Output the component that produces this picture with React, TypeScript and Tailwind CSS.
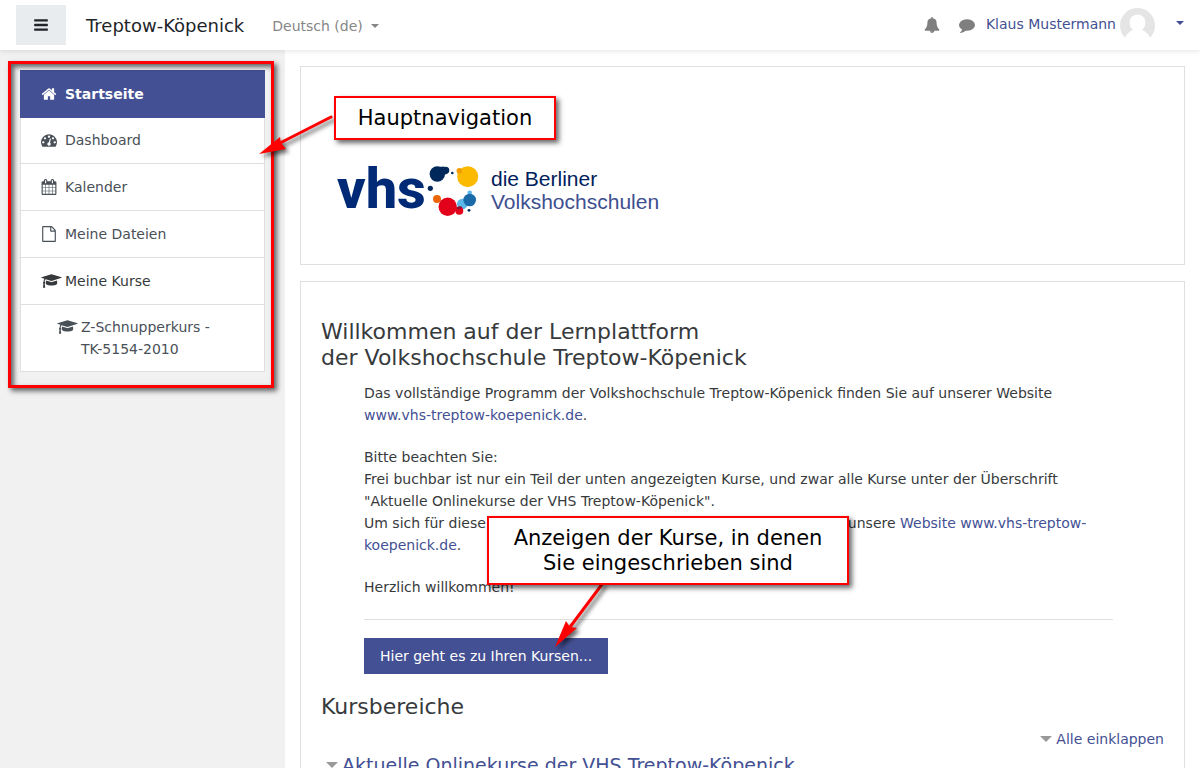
import type { ReactNode } from "react";

type IconProps = {
  d: string;
  width?: number;
  viewBox?: string;
  className?: string;
};

const paths = {
  home: "M1472 992v480q0 26-19 45t-45 19h-384v-384h-256v384h-384q-26 0-45-19t-19-45v-480q0-1 .5-3t.5-3l575-474 575 474q1 2 1 6zm223-69l-62 74q-8 9-21 11h-3q-13 0-21-7l-692-577-692 577q-12 8-24 7-13-2-21-11l-62-74q-8-10-7-23.5t11-21.5l719-599q32-26 76-26t76 26l244 204v-195q0-14 9-23t23-9h192q14 0 23 9t9 23v408l219 182q10 8 11 21.5t-7 23.5z",
  dashboard:
    "M384 1152q0-53-37.5-90.5t-90.5-37.5-90.5 37.5-37.5 90.5 37.5 90.5 90.5 37.5 90.5-37.5 37.5-90.5zm192-448q0-53-37.5-90.5t-90.5-37.5-90.5 37.5-37.5 90.5 37.5 90.5 90.5 37.5 90.5-37.5 37.5-90.5zm428 481l101-382q6-26-7.5-48.5t-38.5-29.5-48 6.5-30 39.5l-101 382q-60 5-107 43.5t-63 98.5q-20 77 20 146t117 89 146-20 89-117q16-60-6-117t-72-91zm660-33q0-53-37.5-90.5t-90.5-37.5-90.5 37.5-37.5 90.5 37.5 90.5 90.5 37.5 90.5-37.5 37.5-90.5zm-640-640q0-53-37.5-90.5t-90.5-37.5-90.5 37.5-37.5 90.5 37.5 90.5 90.5 37.5 90.5-37.5 37.5-90.5zm448 192q0-53-37.5-90.5t-90.5-37.5-90.5 37.5-37.5 90.5 37.5 90.5 90.5 37.5 90.5-37.5 37.5-90.5zm320 448q0 261-141 483-19 29-54 29h-1402q-35 0-54-29-141-221-141-483 0-182 71-348t191-286 286-191 348-71 348 71 286 191 191 286 71 348z",
  calendar:
    "M192 1664h288v-288h-288v288zm352 0h320v-288h-320v288zm-352-352h288v-320h-288v320zm352 0h320v-320h-320v320zm-352-384h288v-288h-288v288zm736 736h320v-288h-320v288zm-384-736h320v-288h-320v288zm768 736h288v-288h-288v288zm-384-352h320v-320h-320v320zm-352-864v-288q0-13-9.5-22.5t-22.5-9.5h-64q-13 0-22.5 9.5t-9.5 22.5v288q0 13 9.5 22.5t22.5 9.5h64q13 0 22.5-9.5t9.5-22.5zm736 864h288v-320h-288v320zm-384-384h320v-288h-320v288zm384 0h288v-288h-288v288zm32-480v-288q0-13-9.5-22.5t-22.5-9.5h-64q-13 0-22.5 9.5t-9.5 22.5v288q0 13 9.5 22.5t22.5 9.5h64q13 0 22.5-9.5t9.5-22.5zm384-64v1280q0 52-38 90t-90 38h-1408q-52 0-90-38t-38-90v-1280q0-52 38-90t90-38h128v-96q0-66 47-113t113-47h64q66 0 113 47t47 113v96h384v-96q0-66 47-113t113-47h64q66 0 113 47t47 113v96h128q52 0 90 38t38 90z",
  file: "M1596 380q28 28 48 76t20 88v1152q0 40-28 68t-68 28h-1344q-40 0-68-28t-28-68v-1600q0-40 28-68t68-28h896q40 0 88 20t76 48zm-444-244v376h376q-10-29-22-41l-313-313q-12-12-41-22zm384 1528v-1024h-416q-40 0-68-28t-28-68v-416h-768v1536h1280z",
  cap: "M1774 836l18 316q4 69-82 128t-235 93.5-323 34.5-323-34.5-235-93.5-82-128l18-316 574 181q22 7 48 7t48-7zm530-324q0 23-22 31l-1120 352q-4 1-10 1t-10-1l-652-206q-43 34-71 111.5t-34 178.5q63 36 63 109 0 69-58 107l58 433q2 14-8 25-9 11-24 11h-192q-15 0-24-11-10-11-8-25l58-433q-58-38-58-107 0-73 65-111 11-207 98-330l-333-104q-22-8-22-31t22-31l1120-352q4-1 10-1t10 1l1120 352q22 8 22 31z",
  bell: "M912 1696q0-16-16-16-59 0-101.5-42.5t-42.5-101.5q0-16-16-16t-16 16q0 73 51.5 124.5t124.5 51.5q16 0 16-16zm816-288q0 52-38 90t-90 38h-448q0 106-75 181t-181 75-181-75-75-181h-448q-52 0-90-38t-38-90q50-42 91-88t85-119.5 74.5-158.5 50-206 19.5-260q0-152 117-282.5t307-158.5q-8-19-8-39 0-40 28-68t68-28 68 28 28 68q0 20-8 39 190 28 307 158.5t117 282.5q0 139 19.5 260t50 206 74.5 158.5 85 119.5 91 88z",
  comment:
    "M1792 896q0 174-120 321.5t-326 233-450 85.5q-70 0-145-8-198 175-460 242-49 14-114 22-17 2-30.5-9t-17.5-29v-1q-3-4-.5-12t2-10 4.5-9.5l6-9 7-8.5 8-9q7-8 31-34.5t34.5-38 31-39.5 32.5-51 27-59 26-76q-157-89-247.5-220t-90.5-281q0-174 120-321.5t326-233 450-85.5 450 85.5 326 233 120 321.5z",
  bars: "M1664 1344v128q0 26-19 45t-45 19h-1408q-26 0-45-19t-19-45v-128q0-26 19-45t45-19h1408q26 0 45 19t19 45zm0-512v128q0 26-19 45t-45 19h-1408q-26 0-45-19t-19-45v-128q0-26 19-45t45-19h1408q26 0 45 19t19 45zm0-512v128q0 26-19 45t-45 19h-1408q-26 0-45-19t-19-45v-128q0-26 19-45t45-19h1408q26 0 45 19t19 45z",
};

function Icon({ d, width = 16, viewBox = "0 0 1792 1792", className = "" }: IconProps) {
  return (
    <svg width={width} height={16} viewBox={viewBox} fill="currentColor" className={className} aria-hidden="true">
      <path d={d} />
    </svg>
  );
}

function Caret({ className = "" }: { className?: string }) {
  return (
    <svg width="8" height="4" viewBox="0 0 8 4" fill="currentColor" className={className} aria-hidden="true">
      <path d="M0 0h8L4 4z" />
    </svg>
  );
}

function Collapse() {
  return (
    <svg width="12" height="6" viewBox="0 0 12 6" fill="#999" className="shrink-0" aria-hidden="true">
      <path d="M0 0h12L6 6z" />
    </svg>
  );
}

const navItems = [
  { label: "Dashboard", icon: paths.dashboard },
  { label: "Kalender", icon: paths.calendar },
  { label: "Meine Dateien", icon: paths.file },
];

function Header() {
  return (
    <header className="relative z-10 flex h-[50px] shrink-0 items-center bg-white px-4 shadow-[0_2px_4px_rgba(0,0,0,0.08)]">
      <button type="button" aria-label="Menü" className="flex h-10 w-[50px] items-center justify-center bg-[#e9ecef] text-[#212529]">
        <Icon d={paths.bars} />
      </button>
      <a href="#" className="ml-5 pt-0.5 text-lg text-[#212529]">
        Treptow-Köpenick
      </a>
      <button type="button" className="ml-7 flex items-center gap-2 pt-0.5 text-[#868686]">
        Deutsch (de)
        <Caret />
      </button>
      <div className="ml-auto flex items-center text-[#7f7f7f]">
        <button type="button" aria-label="Mitteilungen" className="mr-[19px]">
          <Icon d={paths.bell} />
        </button>
        <button type="button" aria-label="Nachrichten" className="mr-[11px]">
          <Icon d={paths.comment} />
        </button>
        <button type="button" className="flex items-center text-[#435093]">
          <span className="pb-0.5">Klaus Mustermann</span>
          <svg width="35" height="35" viewBox="0 0 35 35" className="ml-1" aria-hidden="true">
            <defs>
              <clipPath id="avatar">
                <path d="M0 0h35v30H0z" />
              </clipPath>
            </defs>
            <g clipPath="url(#avatar)">
              <circle cx="17.5" cy="17.5" r="17.5" fill="#e5e5e5" />
              <path
                d="M17.5 6.500c-4.700 0-7.800 3.600-7.800 8.200 0 3 1.300 5.700 3.300 7.200-4 1.400-7 4.600-8.300 8.500V36h25.600v-5.600c-1.300-3.900-4.300-7.100-8.300-8.500 2-1.500 3.300-4.200 3.300-7.200 0-4.600-3.100-8.200-7.800-8.200z"
                fill="#fff"
              />
            </g>
          </svg>
          <Caret className="mb-1 ml-[21px]" />
        </button>
      </div>
    </header>
  );
}

function Sidebar() {
  return (
    <aside className="w-[285px] shrink-0 bg-[#f1f1f1] p-5">
      <nav className="relative">
        <a href="#" className="relative flex items-center border border-[#435093] bg-[#435093] px-5 py-3 font-bold text-white">
          <Icon d={paths.home} className="mr-2" />
          Startseite
        </a>
        <ul className="-mt-px border-x border-[#dfdfdf] bg-white text-[#495057]">
          {navItems.map((item) => (
            <li key={item.label} className="border-b border-[#dfdfdf]">
              <a href="#" className="flex items-center px-5 py-3">
                <Icon d={item.icon} className="mr-2" />
                {item.label}
              </a>
            </li>
          ))}
          <li className="border-b border-[#dfdfdf] text-[#373a3c]">
            <a href="#" className="flex items-center px-5 py-3">
              <Icon d={paths.cap} width={21} viewBox="0 0 2304 1792" className="mr-[3px]" />
              Meine Kurse
            </a>
          </li>
          <li className="border-b border-[#dfdfdf]">
            <a href="#" className="flex items-start px-9 py-[11px]">
              <Icon d={paths.cap} width={21} viewBox="0 0 2304 1792" className="mr-[3px] mt-[3px] shrink-0" />
              Z-Schnupperkurs - TK-5154-2010
            </a>
          </li>
        </ul>
        <div className="pointer-events-none absolute -bottom-4 -left-3 -right-[9px] -top-[9px] border-3 border-[#f00] shadow-[3px_3px_5px_rgba(0,0,0,0.6),inset_3px_3px_5px_rgba(0,0,0,0.6)]" />
      </nav>
    </aside>
  );
}

function Logo() {
  return (
    <svg width="326" height="60" viewBox="0 0 326 60" className="overflow-visible" role="img" aria-label="vhs die Berliner Volkshochschulen">
      <text x="1" y="48" fontFamily="Roboto" fontWeight="800" fontSize="56" fill="#002a76">
        vhs
      </text>
      <g fill="#00285a">
        <circle cx="101.300" cy="14" r="7.700" />
        <circle cx="109.700" cy="10.300" r="3.600" />
        <path d="M103 7l5-.5 3 7-5 3z" />
        <circle cx="116.300" cy="13" r="1.300" />
        <circle cx="94.300" cy="28.300" r="2.600" />
        <circle cx="133" cy="50.300" r="1.400" />
      </g>
      <circle cx="131.700" cy="16.700" r="10.500" fill="#fbba00" />
      <circle cx="123.300" cy="10.700" r="2.800" fill="#f39c00" />
      <circle cx="101" cy="39" r="4" fill="#ec6608" />
      <circle cx="126.300" cy="44" r="5.300" fill="#5bb8e8" />
      <circle cx="133.700" cy="32.700" r="2.300" fill="#5bb8e8" />
      <circle cx="133.700" cy="40" r="6.300" fill="#1a6aa8" />
      <circle cx="111.700" cy="46.700" r="9.200" fill="#e2001a" />
      <circle cx="123.300" cy="50.700" r="4" fill="#e2001a" />
      <path d="M120.500 47.500a5 5 0 0 1 6-.4q-2 2.400-5 2.400z" fill="#8c1030" />
      <g fontFamily="Liberation Sans" fontSize="21">
        <text x="155" y="26" fill="#00205b">
          die Berliner
        </text>
        <text x="155" y="49" fill="#3d4f8f">
          Volkshochschulen
        </text>
      </g>
    </svg>
  );
}

function Link({ children }: { children: ReactNode }) {
  return (
    <a href="#" className="text-[#435093]">
      {children}
    </a>
  );
}

function Content() {
  return (
    <main className="min-w-0 flex-1 px-[15px] pt-4 text-[#373a3c]">
      <section className="border border-[#dfdfdf] px-[35px] pb-11 pt-[93px]">
        <Logo />
      </section>
      <section className="mt-4 border border-[#dfdfdf] px-5 pb-10 pt-[37px]">
        <h2 className="text-[22px] leading-[26px]">
          Willkommen auf der Lernplattform
          <br />
          der Volkshochschule Treptow-Köpenick
        </h2>
        <div className="ml-[43px] mr-[51px] mt-[11px]">
          <p>
            Das vollständige Programm der Volkshochschule Treptow-Köpenick finden Sie auf unserer Website{" "}
            <Link>www.vhs-treptow-koepenick.de</Link>.
          </p>
          <p className="mt-5">
            Bitte beachten Sie:
            <br />
            Frei buchbar ist nur ein Teil der unten angezeigten Kurse, und zwar alle Kurse unter der Überschrift
            "Aktuelle Onlinekurse der VHS Treptow-Köpenick".
            <br />
            Um sich für diese
            <span className="inline-block w-[362px]" />
            unsere <Link>Website www.vhs-treptow-koepenick.de</Link>.
          </p>
          <p className="mt-5">Herzlich willkommen!</p>
          <hr className="mt-[21px] border-[#dfdfdf]" />
          <button type="button" className="mt-[18px] h-9 bg-[#435093] px-4 text-white">
            Hier geht es zu Ihren Kursen...
          </button>
        </div>
        <h2 className="mt-5 text-[22px] leading-[26px]">Kursbereiche</h2>
        <div className="mt-2 flex justify-end">
          <button type="button" className="flex items-center gap-1 text-[#435093]">
            <Collapse />
            Alle einklappen
          </button>
        </div>
        <h3 className="flex items-center gap-1 pl-[5px] text-[19px] leading-[30px]">
          <Collapse />
          <Link>Aktuelle Onlinekurse der VHS Treptow-Köpenick</Link>
        </h3>
      </section>
    </main>
  );
}

function Callout({ className, children }: { className: string; children: ReactNode }) {
  return (
    <div
      className={`absolute z-20 border-2 border-[#f00] bg-white pb-[7px] pt-2 text-center text-[21px] leading-[25px] text-black shadow-[3px_3px_5px_rgba(0,0,0,0.6)] ${className}`}
    >
      {children}
    </div>
  );
}

function App() {
  return (
    <div className="relative flex h-screen flex-col overflow-hidden bg-white font-['DejaVu_Sans',sans-serif] text-sm leading-[22px]">
      <Header />
      <div className="flex flex-1">
        <Sidebar />
        <Content />
      </div>

      <svg
        width="90"
        height="60"
        viewBox="0 0 90 60"
        className="absolute left-[250px] top-[105px] z-20 drop-shadow-[3px_3px_2px_rgba(0,0,0,0.6)]"
        aria-hidden="true"
      >
        <path d="M81 12L30 38" stroke="#f00" strokeWidth="3" strokeLinecap="round" />
        <path d="M9 49L30 32L31 38L36 44Z" fill="#f00" />
      </svg>
      <Callout className="left-[334px] top-24 w-[222px]">Hauptnavigation</Callout>

      <svg
        width="70"
        height="80"
        viewBox="0 0 70 80"
        className="absolute left-[545px] top-[575px] z-20 drop-shadow-[3px_3px_2px_rgba(0,0,0,0.6)]"
        aria-hidden="true"
      >
        <path d="M58 8L25 52" stroke="#f00" strokeWidth="3" />
        <path d="M10 72L21 46L25 52L32 53Z" fill="#f00" />
      </svg>
      <Callout className="left-[487px] top-[516px] w-[362px]">
        Anzeigen der Kurse, in denen
        <br />
        Sie eingeschrieben sind
      </Callout>
    </div>
  );
}

export default App;
